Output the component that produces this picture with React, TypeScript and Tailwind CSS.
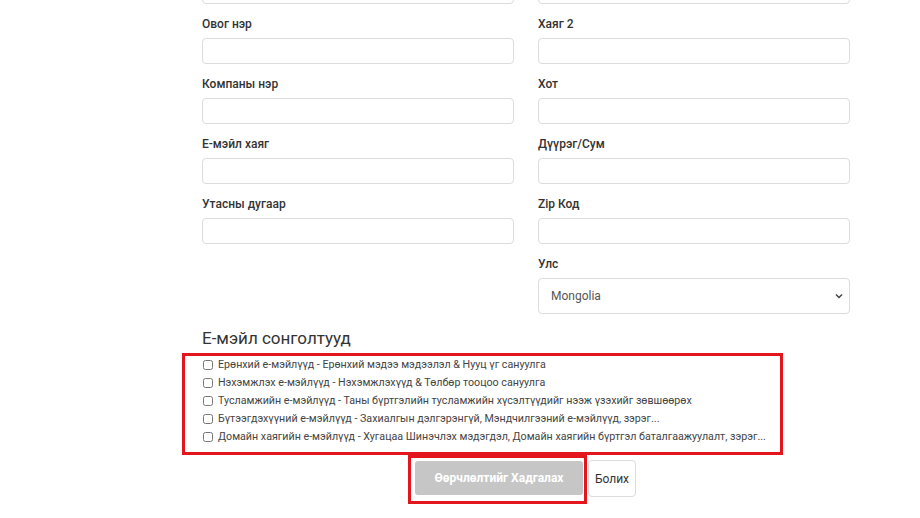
import React from "react";

const Field = ({ label }: { label: string }) => (
  <div className="flex flex-col">
    <label className="text-[12px] leading-[18px] font-medium text-[#333]">{label}</label>
    <input className="mt-[5px] mb-[11px] h-[26px] w-full rounded-[4px] border border-[#dcdcdc] bg-white" />
  </div>
);

const options = [
  "Ерөнхий е-мэйлүүд - Ерөнхий мэдээ мэдээлэл & Нууц үг сануулга",
  "Нэхэмжлэх е-мэйлүүд - Нэхэмжлэхүүд & Төлбөр тооцоо сануулга",
  "Тусламжийн е-мэйлүүд - Таны бүртгэлийн тусламжийн хүсэлтүүдийг нээж үзэхийг зөвшөөрөх",
  "Бүтээгдэхүүний е-мэйлүүд - Захиалгын дэлгэрэнгүй, Мэндчилгээний е-мэйлүүд, зэрэг...",
  "Домайн хаягийн е-мэйлүүд - Хугацаа Шинэчлэх мэдэгдэл, Домайн хаягийн бүртгэл баталгаажуулалт, зэрэг...",
];

export default function App() {
  return (
    <div
      className="w-[920px] h-[518px] overflow-hidden bg-white pl-[202px]"
      style={{ fontFamily: "Roboto, 'Liberation Sans', sans-serif" }}
    >
      <div className="w-[648px]">
        <div className="grid grid-cols-2 gap-x-[24px] -mt-[22px]">
          <div className="flex flex-col">
            <input className="mb-[11px] h-[26px] w-full rounded-[4px] border border-[#dcdcdc] bg-white" />
            <Field label="Овог нэр" />
            <Field label="Компаны нэр" />
            <Field label="Е-мэйл хаяг" />
            <Field label="Утасны дугаар" />
          </div>
          <div className="flex flex-col">
            <input className="mb-[11px] h-[26px] w-full rounded-[4px] border border-[#dcdcdc] bg-white" />
            <Field label="Хаяг 2" />
            <Field label="Хот" />
            <Field label="Дүүрэг/Сум" />
            <Field label="Zip Код" />
            <div className="flex flex-col">
              <label className="text-[12px] leading-[18px] font-medium text-[#333]">Улс</label>
              <div className="relative mt-[5px] h-[36px] w-full rounded-[4px] border border-[#dcdcdc] bg-white flex items-center pl-[12px]">
                <span className="text-[12px] text-[#555]">Mongolia</span>
                <svg className="absolute right-[6px] top-[14px]" width="8" height="6" viewBox="0 0 8 6">
                  <path d="M1 1.5 L4 4.5 L7 1.5" fill="none" stroke="#444" strokeWidth="1.5" />
                </svg>
              </div>
            </div>
          </div>
        </div>

        <h3 className="mt-[14px] text-[17px] leading-[20px] font-normal text-[#333]">Е-мэйл сонголтууд</h3>

        <div className="mt-[5px] -ml-[20px] w-[601px] border-[3px] border-[#e3161e] pl-[18px] pb-[6px]">
          {options.map((o) => (
            <div key={o} className="flex items-center gap-[5px] h-[18px]">
              <input type="checkbox" className="m-0 w-[10px] h-[10px] shrink-0" />
              <span className="text-[10.7px] text-[#444] whitespace-nowrap">{o}</span>
            </div>
          ))}
        </div>

        <div className="flex justify-center pr-[8px]">
          <div className="flex items-start">
            <div className="w-[179px] border-[3px] border-[#e3161e] pl-[4px] pt-[3px] pb-[6px]">
              <button className="w-[168px] h-[34px] rounded-[3px] bg-[#c6c6c6] text-white text-[12px] font-bold">
                Өөрчлөлтийг Хадгалах
              </button>
            </div>
            <button className="ml-[1px] mt-[5px] w-[48px] h-[37px] rounded-[4px] border border-[#dcdcdc] bg-white text-[12px] text-[#333]">
              Болих
            </button>
          </div>
        </div>
      </div>
    </div>
  );
}
